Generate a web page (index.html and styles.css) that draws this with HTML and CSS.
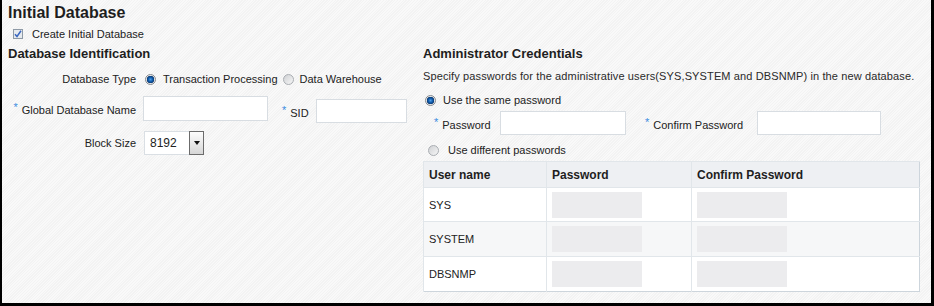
FILE: index.html
```html
<!DOCTYPE html>
<html>
<head>
<meta charset="utf-8">
<title>Initial Database</title>
<link rel="stylesheet" href="styles.css">
</head>
<body>
<div class="page">
  <h1 class="title">Initial Database</h1>
  <div class="create">
    <span class="checkbox"><svg width="8" height="8" viewBox="0 0 8 8"><path d="M1 4.2 L3 6.5 L7 0.8" fill="none" stroke="#3a67c0" stroke-width="1.5"/></svg></span>
    <span>Create Initial Database</span>
  </div>
  <div class="columns">
    <section class="left">
      <h2 class="heading">Database Identification</h2>
      <div class="row row-type">
        <span class="label">Database Type</span>
        <span class="radio radio-on"></span><span class="opt">Transaction Processing</span>
        <span class="radio radio-off radio-gap"></span><span class="opt opt-dw">Data Warehouse</span>
      </div>
      <div class="row row-name">
        <div class="field field-gdn">
          <span class="label"><span class="req">*</span>Global Database Name</span>
          <input class="input input-gdn" type="text">
        </div>
        <div class="field field-sid">
          <span class="sid-label"><span class="req">*</span>SID</span>
          <input class="input input-sid" type="text">
        </div>
      </div>
      <div class="row row-block">
        <span class="label">Block Size</span>
        <span class="select">
          <span class="select-value">8192</span>
          <span class="select-btn"><span class="caret"></span></span>
        </span>
      </div>
    </section>
    <section class="right">
      <h2 class="heading">Administrator Credentials</h2>
      <p class="desc">Specify passwords for the administrative users(SYS,SYSTEM and DBSNMP) in the new database.</p>
      <div class="radio-row same">
        <span class="radio radio-on"></span><span class="opt">Use the same password</span>
      </div>
      <div class="pw-row">
        <span class="pw-label"><span class="req">*</span>Password</span>
        <input class="input input-pw" type="password">
        <span class="cpw-label"><span class="req">*</span>Confirm Password</span>
        <input class="input input-cpw" type="password">
      </div>
      <div class="radio-row diff">
        <span class="radio radio-off"></span><span class="opt">Use different passwords</span>
      </div>
      <table class="users">
        <thead>
          <tr><th class="c1">User name</th><th class="c2">Password</th><th class="c3">Confirm Password</th></tr>
        </thead>
        <tbody>
          <tr class="r1"><td>SYS</td><td><span class="ph"></span></td><td><span class="ph"></span></td></tr>
          <tr class="r2 alt"><td>SYSTEM</td><td><span class="ph"></span></td><td><span class="ph"></span></td></tr>
          <tr class="r3"><td>DBSNMP</td><td><span class="ph"></span></td><td><span class="ph"></span></td></tr>
        </tbody>
      </table>
    </section>
  </div>
</div>
</body>
</html>
```
FILE: styles.css
```css
html, body {
  margin: 0;
  padding: 0;
}
body {
  width: 934px;
  height: 306px;
  box-sizing: border-box;
  border-left: 2px solid #000;
  border-right: 3px solid #000;
  border-bottom: 3px solid #000;
  background-color: #f7f7f7;
  background-image: repeating-linear-gradient(135deg, #f9f9f9 0px, #f9f9f9 1px, #f3f3f3 1px, #f3f3f3 2px);
  font-family: "Liberation Sans", Arial, sans-serif;
  font-size: 11px;
  line-height: 14px;
  color: #222;
  overflow: hidden;
}
.page {
  padding-left: 6px;
}
.title {
  margin: 0;
  padding-top: 4px;
  font-size: 16px;
  line-height: 18px;
  font-weight: bold;
  color: #1e1e1e;
}
.create {
  display: flex;
  align-items: center;
  height: 14px;
  margin-top: 5px;
  margin-left: 5px;
}
.checkbox {
  width: 8px;
  height: 8px;
  border: 1px solid #8e9aa6;
  background: #e6eaee;
  margin-right: 9px;
  display: flex;
}
.columns {
  display: flex;
  margin-top: 5px;
}
.heading {
  margin: 0;
  font-size: 13px;
  line-height: 16px;
  font-weight: bold;
  color: #1e1e1e;
}
.left {
  width: 415px;
  flex: none;
}
.right {
  flex: none;
  width: 500px;
  display: flex;
  flex-direction: column;
}
.row {
  display: flex;
  align-items: center;
}
.label {
  width: 128px;
  flex: none;
  text-align: right;
}
.req {
  color: #3b8ce0;
  vertical-align: 3px;
  margin-right: 4px;
}
.row-type {
  height: 16px;
  margin-top: 9px;
}
.radio {
  width: 9px;
  height: 9px;
  border-radius: 50%;
  flex: none;
  display: inline-block;
}
.radio-on {
  border: 1px solid #84898f;
  background: radial-gradient(circle at 50% 50%, #4f9ee6 0, #125fb0 2px, #0b3b75 3.5px, #e4e4e4 4px, #f8f8f8 5px);
}
.radio-off {
  border: 1px solid #a9adb2;
  background: linear-gradient(135deg, #cfd1d4, #f6f6f6);
}
.row-type .radio-on {
  margin-left: 9px;
}
.row-type .opt {
  margin-left: 7px;
}
.row-type .radio-gap {
  margin-left: 5px;
}
.row-type .opt-dw {
  margin-left: 6px;
}
.row-name {
  align-items: flex-start;
  margin-top: 9px;
  height: 27px;
}
.field {
  display: flex;
  align-items: center;
}
.input {
  box-sizing: border-box;
  border: 1px solid #d8dde2;
  background: #fff;
  padding: 0;
  margin: 0;
  outline: none;
  flex: none;
}
.input-gdn {
  margin-left: 7px;
  width: 125px;
  height: 25px;
}
.field-sid {
  margin-left: 14px;
  margin-top: 3px;
}
.input-sid {
  margin-left: 7px;
  width: 91px;
  height: 24px;
}
.row-block {
  margin-top: 8px;
  height: 24px;
}
.select {
  margin-left: 8px;
  display: flex;
  height: 24px;
}
.select-value {
  box-sizing: border-box;
  width: 45px;
  height: 24px;
  border: 1px solid #dadfe4;
  border-right: none;
  background: #fff;
  padding-left: 5px;
  line-height: 22px;
  font-size: 12px;
  color: #222;
}
.select-btn {
  box-sizing: border-box;
  width: 15px;
  height: 24px;
  border: 1px solid #6b6b6b;
  background: linear-gradient(#fdfdfd, #d6d6d6);
  display: flex;
  align-items: center;
  justify-content: center;
}
.caret {
  width: 0;
  height: 0;
  border-left: 3.5px solid transparent;
  border-right: 3.5px solid transparent;
  border-top: 4px solid #111;
}
.desc {
  margin: 7px 0 0 0;
  line-height: 14px;
  color: #2a2a2a;
  letter-spacing: 0.12px;
  white-space: nowrap;
}
.radio-row {
  display: flex;
  align-items: center;
  height: 14px;
}
.radio-row.same {
  margin-top: 10px;
}
.radio-row.same .radio {
  margin-left: 2px;
}
.radio-row.same .opt {
  margin-left: 7px;
}
.pw-row {
  display: flex;
  align-items: center;
  height: 24px;
  margin-top: 4px;
}
.pw-label {
  margin-left: 11px;
  width: 59px;
  flex: none;
}
.input-pw {
  margin-left: 7px;
  width: 126px;
  height: 24px;
}
.cpw-label {
  margin-left: 19px;
  width: 103px;
  flex: none;
}
.input-cpw {
  margin-left: 9px;
  width: 124px;
  height: 24px;
}
.radio-row.diff {
  margin-top: 8px;
}
.radio-row.diff .radio {
  margin-left: 5px;
}
.radio-row.diff .opt {
  margin-left: 9px;
}
.users {
  margin-top: 4px;
  width: 497px;
  border-collapse: collapse;
  border: 1px solid #cdd5dc;
  background: #fff;
  table-layout: fixed;
}
.users th, .users td {
  border-left: 1px solid #e1e6ea;
  border-top: 1px solid #e1e6ea;
  padding: 0 0 0 5px;
  text-align: left;
  vertical-align: middle;
}
.users th {
  background: #eef0f3;
  font-size: 12px;
  font-weight: bold;
  color: #1e1e1e;
  height: 25px;
}
.users .c1 { width: 117px; }
.users .c2 { width: 139px; }
.users .c3 { width: 222px; }
.users td {
  font-size: 11px;
}
.users .r1 td { height: 33px; }
.users .r2 td { height: 34px; }
.users .r3 td { height: 34px; }
.users tr.alt td {
  background: #f6f7f8;
}
.ph {
  display: block;
  width: 90px;
  height: 26px;
  background: #ececee;
}
```
